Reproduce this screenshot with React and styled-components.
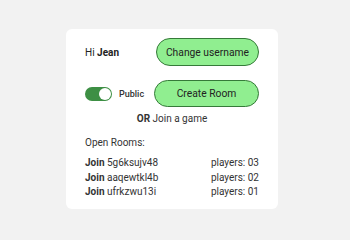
import React from "react";
import styled, { createGlobalStyle } from "styled-components";

const Global = createGlobalStyle`
  html, body { margin: 0; padding: 0; background: #f2f2f2; }
  body { font-family: Roboto, "Noto Sans", sans-serif; color: #222; }
`;

const Page = styled.div`
  width: 350px;
  height: 240px;
  display: flex;
  padding: 29px 0 0 66px;
  box-sizing: border-box;
`;

const Card = styled.div`
  width: 212px;
  height: 180px;
  box-sizing: border-box;
  background: #fff;
  border-radius: 6px;
  padding: 9px 19px 10px;
  display: flex;
  flex-direction: column;
`;

const Row = styled.div`
  display: flex;
  align-items: center;
  justify-content: space-between;
  margin-top: ${(p) => p.$mt || 0}px;
`;

const Greeting = styled.div`
  font-size: 10px;
  color: #222;
`;

const Button = styled.button`
  font-family: Roboto, "Noto Sans", sans-serif;
  font-size: 10.3px;
  color: #222;
  background: #90ee90;
  border: 1px solid #357a39;
  border-radius: 999px;
  height: ${(p) => p.$h}px;
  width: ${(p) => p.$w}px;
  padding: 0;
  display: flex;
  align-items: center;
  justify-content: center;
`;

const ToggleGroup = styled.label`
  display: flex;
  align-items: center;
  gap: 7px;
`;

const Track = styled.span`
  position: relative;
  width: 27px;
  height: 14px;
  border-radius: 7px;
  background: #3d8f44;
  display: inline-block;
`;

const Knob = styled.span`
  position: absolute;
  top: 1px;
  right: 1px;
  width: 12px;
  height: 12px;
  border-radius: 50%;
  background: #fff;
`;

const ToggleLabel = styled.span`
  font-size: 9px;
  font-weight: 500;
  color: #333;
`;

const Or = styled.div`
  text-align: center;
  font-size: 10px;
  line-height: 14px;
  margin-top: 5px;
  color: #333;
`;

const Heading = styled.div`
  font-size: 10px;
  line-height: 14px;
  margin-top: 10px;
  color: #333;
`;

const List = styled.div`
  margin-top: 6px;
  display: flex;
  flex-direction: column;
`;

const RoomRow = styled.div`
  display: flex;
  justify-content: space-between;
  font-size: 10px;
  line-height: 14.5px;
  color: #333;
`;

const rooms = [
  { id: "5g6ksujv48", players: "03" },
  { id: "aaqewtkl4b", players: "02" },
  { id: "ufrkzwu13i", players: "01" },
];

export default function App() {
  return (
    <>
      <Global />
      <Page>
        <Card>
          <Row>
            <Greeting>
              Hi <b>Jean</b>
            </Greeting>
            <Button $w={103} $h={28}>Change username</Button>
          </Row>
          <Row $mt={14}>
            <ToggleGroup>
              <Track>
                <Knob />
              </Track>
              <ToggleLabel>Public</ToggleLabel>
            </ToggleGroup>
            <Button $w={105} $h={27}>Create Room</Button>
          </Row>
          <Or>
            <b>OR</b> Join a game
          </Or>
          <Heading>Open Rooms:</Heading>
          <List>
            {rooms.map((r) => (
              <RoomRow key={r.id}>
                <span>
                  <b>Join</b> {r.id}
                </span>
                <span>players: {r.players}</span>
              </RoomRow>
            ))}
          </List>
        </Card>
      </Page>
    </>
  );
}
